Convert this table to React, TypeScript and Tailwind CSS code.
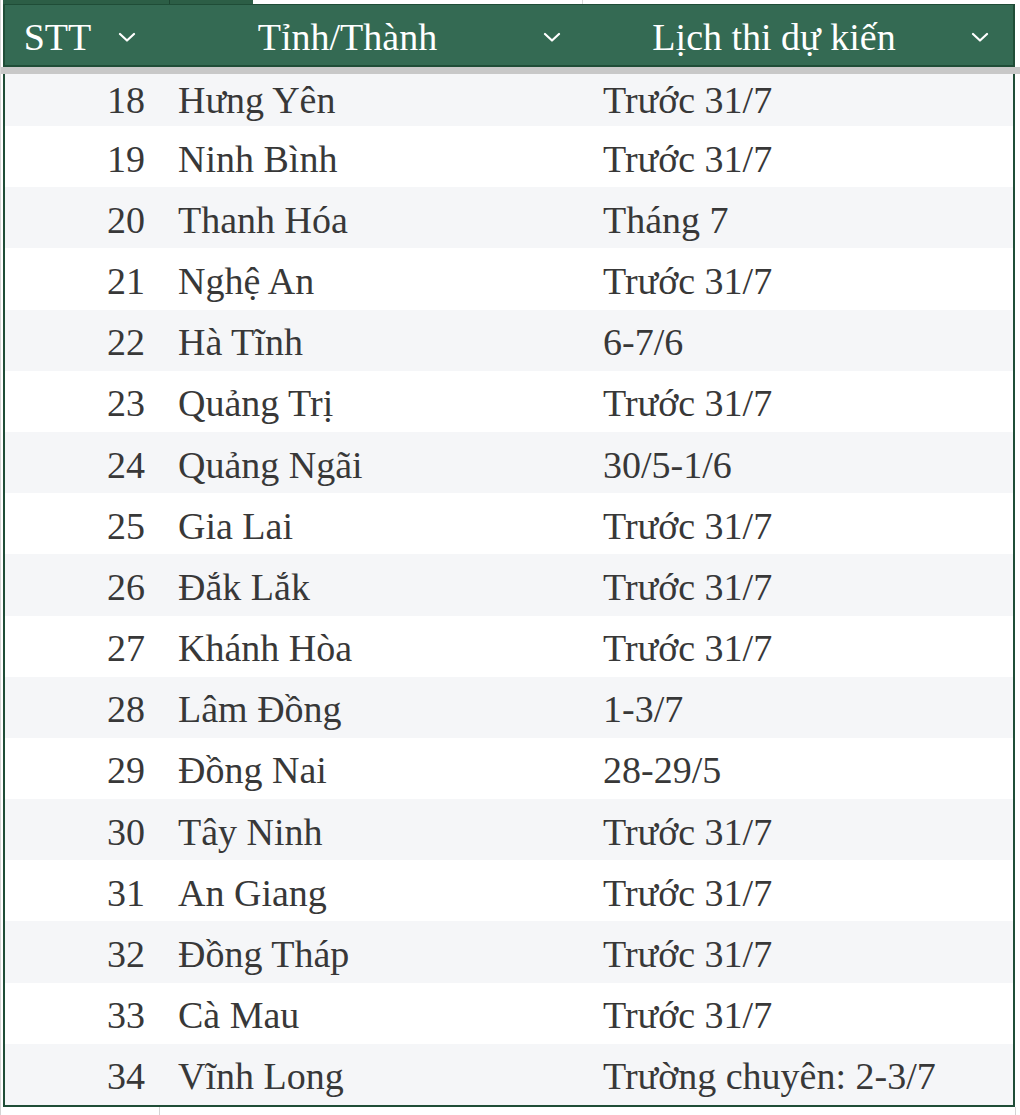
const rows = [
  { stt: 18, name: "Hưng Yên", date: "Trước 31/7" },
  { stt: 19, name: "Ninh Bình", date: "Trước 31/7" },
  { stt: 20, name: "Thanh Hóa", date: "Tháng 7" },
  { stt: 21, name: "Nghệ An", date: "Trước 31/7" },
  { stt: 22, name: "Hà Tĩnh", date: "6-7/6" },
  { stt: 23, name: "Quảng Trị", date: "Trước 31/7" },
  { stt: 24, name: "Quảng Ngãi", date: "30/5-1/6" },
  { stt: 25, name: "Gia Lai", date: "Trước 31/7" },
  { stt: 26, name: "Đắk Lắk", date: "Trước 31/7" },
  { stt: 27, name: "Khánh Hòa", date: "Trước 31/7" },
  { stt: 28, name: "Lâm Đồng", date: "1-3/7" },
  { stt: 29, name: "Đồng Nai", date: "28-29/5" },
  { stt: 30, name: "Tây Ninh", date: "Trước 31/7" },
  { stt: 31, name: "An Giang", date: "Trước 31/7" },
  { stt: 32, name: "Đồng Tháp", date: "Trước 31/7" },
  { stt: 33, name: "Cà Mau", date: "Trước 31/7" },
  { stt: 34, name: "Vĩnh Long", date: "Trường chuyên: 2-3/7" },
]

function Chevron() {
  return (
    <svg width="18" height="10" viewBox="0 0 18 10" fill="none">
      <polyline points="2,2 9,8.5 16,2" stroke="white" strokeWidth="2.2" strokeLinecap="round" strokeLinejoin="round" />
    </svg>
  )
}

function HeaderCell({ label }: { label: string }) {
  return (
    <div className="flex items-center h-full">
      <div className="flex-1 text-center text-white pt-[4px]">{label}</div>
      <div className="w-[50px] flex items-center pl-[8px] pt-[4px]">
        <Chevron />
      </div>
    </div>
  )
}

export default function App() {
  return (
    <div
      className="w-[1020px] h-[1115px] bg-white overflow-hidden relative text-[38px] leading-none"
      style={{ fontFamily: '"Liberation Serif", "Times New Roman", serif' }}
    >
      {/* sheet gridline at far left */}
      <div className="absolute left-0 top-0 w-[1px] h-full bg-[#d4d4d4]" />

      {/* top strip: previous row peeking out */}
      <div className="h-[4px] flex">
        <div className="w-[3px]" />
        <div className="w-[167px] bg-[#2c5e46] border-r border-[#1d4532]" />
        <div className="w-[83px] bg-[#2c5e46]" />
        <div className="w-[330px] border-r border-[#d9d9d9]" />
        <div className="flex-1" />
      </div>

      {/* header */}
      <div className="ml-[3px] w-[1012px] h-[63px] bg-[#346a53] border-x-2 border-t border-b-2 border-[#1f4d37] grid grid-cols-[155px_425px_1fr]">
        <HeaderCell label="STT" />
        <HeaderCell label="Tỉnh/Thành" />
        <HeaderCell label="Lịch thi dự kiến" />
      </div>

      {/* frozen pane divider */}
      <div className="h-[7px] bg-[#c8c8c8]" />

      {/* body */}
      <div className="ml-[3px] w-[1012px] border-x-2 border-b-2 border-[#1f4d37] text-[#383838]">
        {rows.map((r, i) => (
          <div
            key={r.stt}
            className={
              "grid grid-cols-[155px_425px_1fr] items-center " +
              (i === 0 ? "h-[52px] pt-0 " : "h-[61.2px] pt-[4px] ") +
              (i % 2 === 0 ? "bg-[#f5f6f8]" : "bg-white")
            }
          >
            <div className="text-right pr-[15px]">{r.stt}</div>
            <div className="pl-[18px]">{r.name}</div>
            <div className="pl-[18px]">{r.date}</div>
          </div>
        ))}
      </div>

      {/* sheet area below */}
      <div className="flex h-[10px]">
        <div className="w-[160px] border-r border-[#d4d4d4]" />
        <div className="w-[856px] border-r border-[#d4d4d4]" />
      </div>
    </div>
  )
}
